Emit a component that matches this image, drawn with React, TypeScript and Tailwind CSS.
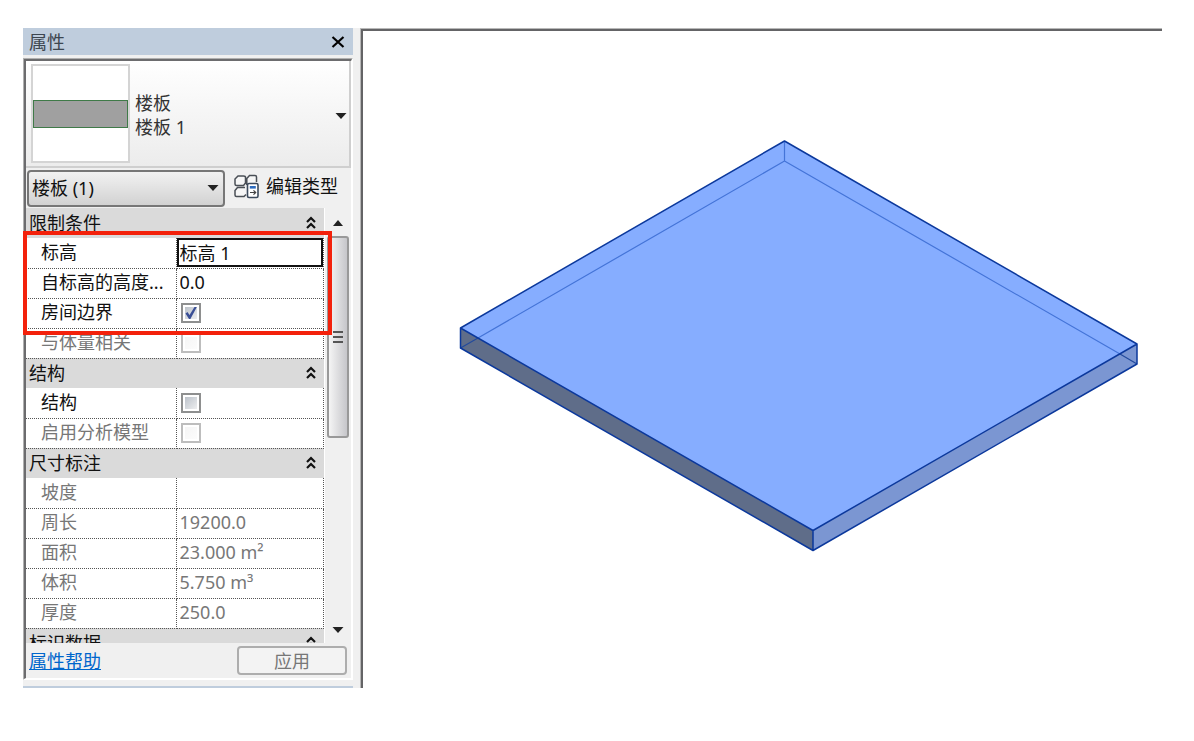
import { useState } from "react";

type Row = { label: string; value?: string; check?: boolean; disabled?: boolean; kind: "text" | "check" | "active" };
type Group = { title: string; rows: Row[] };

const groups: Group[] = [
  {
    title: "限制条件",
    rows: [
      { label: "标高", value: "标高 1", kind: "active" },
      { label: "自标高的高度...", value: "0.0", kind: "text" },
      { label: "房间边界", check: true, kind: "check" },
      { label: "与体量相关", check: false, disabled: true, kind: "check" },
    ],
  },
  {
    title: "结构",
    rows: [
      { label: "结构", check: false, kind: "check" },
      { label: "启用分析模型", check: false, disabled: true, kind: "check" },
    ],
  },
  {
    title: "尺寸标注",
    rows: [
      { label: "坡度", value: "", disabled: true, kind: "text" },
      { label: "周长", value: "19200.0", disabled: true, kind: "text" },
      { label: "面积", value: "23.000 m²", disabled: true, kind: "text" },
      { label: "体积", value: "5.750 m³", disabled: true, kind: "text" },
      { label: "厚度", value: "250.0", disabled: true, kind: "text" },
    ],
  },
  { title: "标识数据", rows: [] },
];

function CheckBox({ label, initial, disabled }: { label: string; initial: boolean; disabled?: boolean }) {
  const [on, setOn] = useState(initial);
  return (
    <span className="grid size-5 place-items-center">
      <input
        type="checkbox"
        aria-label={label}
        checked={on}
        disabled={disabled}
        onChange={() => setOn(!on)}
        className="col-start-1 row-start-1 size-5 appearance-none border-2 border-[#8e8f8f] bg-linear-to-br from-[#b4bbc4] to-[#f6f6f6] bg-clip-content p-[2px] disabled:border-[#bdbdbd] disabled:from-[#f4f4f4] disabled:to-[#fdfdfd]"
      />
      {on && (
        <svg viewBox="0 0 20 20" className="pointer-events-none col-start-1 row-start-1 size-5" aria-hidden="true">
          <path d="M4.500 10.500 L6.500 9 L8.500 12 L13.500 4 L15.800 4 L9.400 16 L8 16 Z" fill="#3a4f96" />
        </svg>
      )}
    </span>
  );
}

function Chevrons() {
  return (
    <svg viewBox="0 0 10 14" className="h-[14px] w-[10px]" fill="none" stroke="#111" strokeWidth="2.200" aria-hidden="true">
      <path d="M1 6 L5 2 L9 6 M1 12 L5 8 L9 12" />
    </svg>
  );
}

function EditTypeIcon() {
  return (
    <svg viewBox="0 0 26 25" className="h-[25px] w-[26px]" fill="#f6f6f6" stroke="#4a4f56" strokeWidth="1.500" aria-hidden="true">
      <path d="M4 2 H9.500 Q11.500 2 11.500 3.500 V9 L9.500 11.500 H2.500 Q1 11.500 1 10 V5 Z M12.800 11 V4.500 L15.500 1.500 H21 Q22.500 1.500 22.500 3 V8 M11 13.500 H3.500 L1 16.500 V21 Q1 22.500 2.500 22.500 H10 L12 20.500" />
      <rect x="13.500" y="9.500" width="10.500" height="14" rx="1.500" fill="#fff" stroke="#3c4a5c" strokeWidth="1.600" />
      <rect x="15.800" y="12" width="6" height="2.600" fill="#2d6cc0" stroke="none" />
      <path d="M16 18.500 H21.500 M19.500 16.300 L21.700 18.500 L19.500 20.700" fill="none" stroke="#444" strokeWidth="1.200" />
    </svg>
  );
}

function Arrow({ up }: { up?: boolean }) {
  return (
    <svg viewBox="0 0 12 6" className="h-[6px] w-3" fill="#222" aria-hidden="true">
      <path d={up ? "M1 6 L6 0 L11 6 Z" : "M0.500 0 H11.500 L6 6 Z"} />
    </svg>
  );
}

function PropertyTable() {
  return (
    <div className="relative min-w-0 flex-1">
      <div className="h-[435px] overflow-hidden">
        <table className="w-full table-fixed border-collapse">
          <colgroup>
            <col className="w-[150px]" />
            <col />
          </colgroup>
          {groups.map((g) => (
            <tbody key={g.title}>
              <tr className="h-[30px] bg-[#dadada]">
                <th colSpan={2} className="h-[30px] p-0 text-left font-normal">
                  <div className="flex items-center justify-between pl-[3px] pr-2 leading-[26px]">
                    {g.title}
                    <button aria-label={"折叠" + g.title}>
                      <Chevrons />
                    </button>
                  </div>
                </th>
              </tr>
              {g.rows.map((r) => (
                <tr key={r.label} className={r.disabled ? "h-[30px] text-[#777]" : "h-[30px]"}>
                  <td className="h-[30px] truncate border-b border-r border-dotted border-[#555] p-0 pb-[2px] pl-[15px] leading-[26px]">{r.label}</td>
                  <td className="h-[30px] border-b border-r border-dotted border-[#555] p-0 leading-[26px]">
                    {r.kind === "check" ? (
                      <div className="flex items-center pl-1">
                        <CheckBox label={r.label} initial={!!r.check} disabled={r.disabled} />
                      </div>
                    ) : (
                      <input
                        aria-label={r.label}
                        defaultValue={r.value}
                        disabled={r.disabled}
                        className={
                          r.kind === "active"
                            ? "block h-[29px] w-full border-2 border-[#111] bg-white pb-[2px] pl-px outline-none"
                            : "block h-[29px] w-full bg-white pb-[2px] pl-[3px] outline-none"
                        }
                      />
                    )}
                  </td>
                </tr>
              ))}
            </tbody>
          ))}
        </table>
      </div>
      <div className="pointer-events-none absolute -left-[3px] -right-[8px] top-[23px] h-[104px] border-4 border-[#f3210b]" />
    </div>
  );
}

function Properties() {
  return (
    <aside className="flex w-[337px] shrink-0 flex-col bg-[#f0f0f0]">
      <div className="mr-[7px] flex h-[27px] items-center justify-between bg-[#bfcddd] pl-[6px] pr-2">
        <h1 className="text-[#3d4650]">属性</h1>
        <button aria-label="关闭">
          <svg viewBox="0 0 14 12" className="h-3 w-[14px]" stroke="#000" strokeWidth="2.200" aria-hidden="true">
            <path d="M1.500 1 L12.500 11 M12.500 1 L1.500 11" />
          </svg>
        </button>
      </div>
      <div className="mr-[7px] mt-[3px] border border-b-white border-l-[#b0b0b0] border-r-white border-t-[#b0b0b0]">
        <div className="border-b border-r border-l-2 border-t-2 border-b-white border-l-[#6c6c6e] border-r-white border-t-[#6c6c6e]">
          <button className="flex h-[107px] w-full items-center border-b-2 border-r-2 border-[#cfcfcf] bg-linear-to-b from-white to-[#ececec] pl-[5px] pr-[2px] text-left text-[#333]">
            <span className="flex h-[99px] w-[99px] items-center border-2 border-[#d4d4d4] bg-white">
              <span className="h-[28px] w-full border border-[#3f7a48] bg-[#a0a0a0]" />
            </span>
            <span className="flex-1 pl-[5px] pt-[3px] leading-6">
              楼板
              <br />
              楼板 1
            </span>
            <span className="pt-1">
              <Arrow />
            </span>
          </button>
          <div className="flex h-10 items-center gap-[9px] pl-px">
            <div className="grid w-[198px] items-center">
              <select
                aria-label="实例"
                className="col-start-1 row-start-1 h-[37px] appearance-none rounded-[4px] border-2 border-[#777] bg-linear-to-b from-[#f2f2f2] to-[#d2d2d2] pl-[3px]"
              >
                <option>楼板 (1)</option>
              </select>
              <span className="pointer-events-none col-start-1 row-start-1 justify-self-end pr-[6px]">
                <Arrow />
              </span>
            </div>
            <button className="flex items-center gap-[6px] pb-1">
              <EditTypeIcon />
              编辑类型
            </button>
          </div>
          <div className="flex bg-white">
            <PropertyTable />
            <div className="ml-px flex w-[26px] flex-col items-center justify-between bg-[#f0f0f0] pb-[10px] pt-3">
              <Arrow up />
              <div className="mt-[10px] flex h-[202px] w-[22px] flex-col items-center justify-center gap-[3px] rounded-[3px] border-2 border-[#999] bg-linear-to-r from-[#f5f5f5] to-[#c6c6ca]">
                <span className="h-[2px] w-[10px] bg-[#555]" />
                <span className="h-[2px] w-[10px] bg-[#555]" />
                <span className="h-[2px] w-[10px] bg-[#555]" />
              </div>
              <span className="flex-1" />
              <Arrow />
            </div>
          </div>
          <div className="flex h-[35px] items-center justify-between pl-[3px] pr-1">
            <a href="#help" className="text-[#0066cc] underline">
              属性帮助
            </a>
            <button disabled className="h-[29px] w-[110px] rounded-[4px] border-2 border-[#adadad] bg-[#f3f3f3] text-[#777]">
              应用
            </button>
          </div>
        </div>
      </div>
      <div className="mr-[7px] mt-[6px] h-[2px] bg-[#bfcddd]" />
    </aside>
  );
}

function Viewport() {
  return (
    <main className="min-w-0 flex-1 border-l border-t border-[#b8b8b8] bg-white">
      <div className="h-full border-l-2 border-t-2 border-[#646466]">
        <svg viewBox="363 31 799 656" className="w-full" strokeLinejoin="round" aria-label="楼板三维视图" role="img">
          <path d="M784.500 141 L1137 344 L813 530.500 L460.500 328 Z" fill="#86adff" />
          <path d="M460.500 328 L813 530.500 V550.500 L460.500 348 Z" fill="#5f6d89" />
          <path d="M813 530.500 L1137 344 V364 L813 550.500 Z" fill="#7b96d2" />
          <path d="M784.500 141 V161 M478 338 L784.500 161 L1120 354" fill="none" stroke="#4474d8" strokeWidth="1.200" />
          <path d="M460.500 348 L478 338 M1120 354 L1137 364" fill="none" stroke="#234a9c" strokeWidth="1.200" />
          <path d="M460.500 328 L784.500 141 L1137 344 V364 L813 550.500 L460.500 348 Z L813 530.500 L1137 344 M813 530.500 V550.500" fill="none" stroke="#0b389c" strokeWidth="1.500" />
        </svg>
      </div>
    </main>
  );
}

export default function App() {
  return (
    <div className="flex min-h-screen bg-white pb-[54px] pl-[23px] pr-8 pt-7 font-['Noto_Sans','Noto_Sans_CJK_SC',sans-serif] text-[18px] leading-6 text-[#111]">
      <Properties />
      <Viewport />
    </div>
  );
}
